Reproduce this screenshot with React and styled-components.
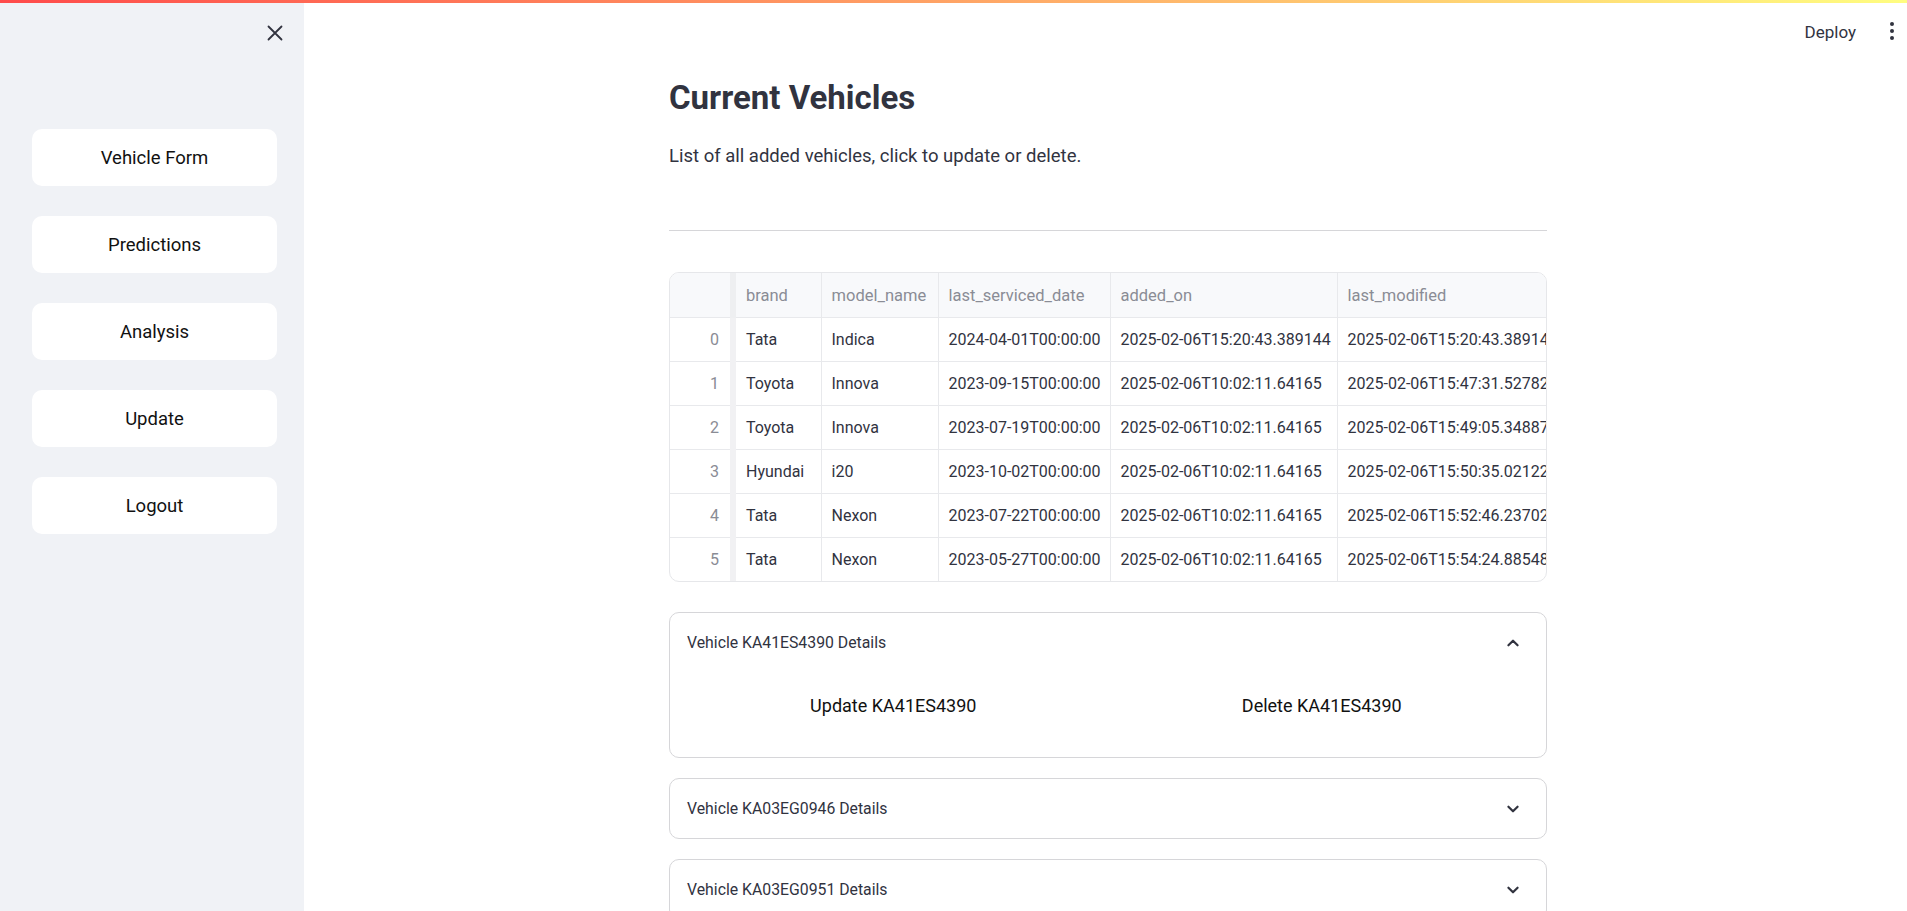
import styled, { createGlobalStyle } from "styled-components";

const GlobalStyle = createGlobalStyle`
  html, body {
    margin: 0;
    padding: 0;
    background: #ffffff;
  }
  body {
    font-family: Roboto, "Liberation Sans", sans-serif;
    color: #31333f;
    overflow: hidden;
  }
  * {
    box-sizing: border-box;
  }
`;

const Page = styled.div`
  display: flex;
  flex-direction: column;
  height: 100vh;
  width: 100vw;
  overflow: hidden;
`;

const Decoration = styled.div`
  height: 3px;
  flex-shrink: 0;
  background: linear-gradient(90deg, rgb(255, 75, 75), rgb(255, 253, 128));
`;

const Body = styled.div`
  display: flex;
  flex: 1;
  min-height: 0;
`;

const Sidebar = styled.aside`
  width: 304px;
  flex-shrink: 0;
  background: #f0f2f6;
  display: flex;
  flex-direction: column;
  padding: 0 27px 0 32px;
`;

const SidebarTop = styled.div`
  height: 126px;
  display: flex;
  justify-content: flex-end;
  padding-top: 22px;
  margin-right: -6px;
`;

const CloseButton = styled.button`
  width: 16px;
  height: 16px;
  padding: 0;
  border: none;
  background: none;
  color: #31333f;
  display: flex;
  align-items: center;
  justify-content: center;
  cursor: pointer;
`;

const NavList = styled.nav`
  display: flex;
  flex-direction: column;
  gap: 30px;
`;

const NavButton = styled.button`
  height: 57px;
  width: 245px;
  border: none;
  border-radius: 10px;
  background: #ffffff;
  color: #111111;
  font-family: inherit;
  font-size: 18.5px;
  cursor: pointer;
`;

const Main = styled.main`
  flex: 1;
  display: flex;
  flex-direction: column;
  padding-left: 5px;
  min-width: 0;
`;

const TopBar = styled.header`
  height: 58px;
  flex-shrink: 0;
  display: flex;
  align-items: center;
  justify-content: flex-end;
  gap: 34px;
  padding-right: 13px;
`;

const DeployLink = styled.span`
  font-size: 17px;
  color: #31333f;
`;

const MenuDots = styled.div`
  display: flex;
  flex-direction: column;
  gap: 3px;
  padding-bottom: 2px;

  span {
    width: 4px;
    height: 4px;
    border-radius: 50%;
    background: #31333f;
  }
`;

const Content = styled.section`
  width: 878px;
  margin: 0 auto;
  display: flex;
  flex-direction: column;
`;

const Title = styled.h2`
  margin: 17px 0 0;
  font-size: 33px;
  font-weight: 700;
  line-height: 1.2;
  color: #31333f;
`;

const Subtitle = styled.p`
  margin: 26px 0 0;
  font-size: 18.5px;
  line-height: 1.4;
  color: #31333f;
`;

const Divider = styled.hr`
  margin: 61px 0 0;
  border: none;
  border-top: 1px solid #d6d6d9;
  width: 100%;
`;

const TableFrame = styled.div`
  margin-top: 41px;
  border: 1px solid #e6e7ea;
  border-radius: 10px;
  overflow: hidden;
`;

const Table = styled.table`
  border-collapse: collapse;
  table-layout: fixed;
  width: 1080px;
  font-size: 16px;
`;

const HeadCell = styled.th`
  height: 44px;
  background: #f8f9fb;
  color: #8a8c95;
  font-weight: 400;
  font-size: 16.5px;
  text-align: left;
  padding: 0 0 0 10px;
  border-right: 1px solid #e8e9ec;
  border-bottom: 1px solid #e8e9ec;
  white-space: nowrap;
  overflow: hidden;
  ${(p) => p.$sticky && "border-left: 6px solid #eeeff1;"}
`;

const Cell = styled.td`
  height: 44px;
  padding: 0 0 0 10px;
  color: #31333f;
  border-right: 1px solid #e8e9ec;
  border-bottom: 1px solid #e8e9ec;
  white-space: nowrap;
  overflow: hidden;
  ${(p) => p.$sticky && "border-left: 6px solid #f1f1f3;"}

  tr:last-child & {
    border-bottom: none;
  }
`;

const IndexCell = styled(Cell)`
  text-align: right;
  padding: 0 11px 0 0;
  color: #8a8c95;
  border-right: 1px solid #dcdde1;
`;

const IndexHead = styled(HeadCell)`
  border-right: 1px solid #dcdde1;
`;

const Expander = styled.div`
  border: 1px solid #d6d6d9;
  border-radius: 10px;
  margin-top: ${(p) => (p.$first ? "30px" : "20px")};
`;

const ExpanderHeader = styled.div`
  height: 59px;
  display: flex;
  align-items: center;
  justify-content: space-between;
  padding: 0 22px 0 17px;
  font-size: 15.8px;
  color: #31333f;
`;

const ExpanderBody = styled.div`
  display: grid;
  grid-template-columns: 1fr 1fr;
  gap: 20px;
  padding: 9px 20px 28px 19px;
`;

const ActionButton = styled.button`
  height: 48px;
  width: 100%;
  border: none;
  background: #ffffff;
  color: #111111;
  font-family: inherit;
  font-size: 18px;
  cursor: pointer;
`;

const Chevron = ({ up }) => (
  <svg width="22" height="22" viewBox="0 0 24 24" fill="none" stroke="#31333f" strokeWidth="2.4" strokeLinecap="round" strokeLinejoin="round">
    {up ? <path d="M7 14.5l5-5 5 5" /> : <path d="M7 9.5l5 5 5-5" />}
  </svg>
);

const rows = [
  ["Tata", "Indica", "2024-04-01T00:00:00", "2025-02-06T15:20:43.389144", "2025-02-06T15:20:43.389144"],
  ["Toyota", "Innova", "2023-09-15T00:00:00", "2025-02-06T10:02:11.64165", "2025-02-06T15:47:31.527821"],
  ["Toyota", "Innova", "2023-07-19T00:00:00", "2025-02-06T10:02:11.64165", "2025-02-06T15:49:05.348874"],
  ["Hyundai", "i20", "2023-10-02T00:00:00", "2025-02-06T10:02:11.64165", "2025-02-06T15:50:35.021225"],
  ["Tata", "Nexon", "2023-07-22T00:00:00", "2025-02-06T10:02:11.64165", "2025-02-06T15:52:46.237021"],
  ["Tata", "Nexon", "2023-05-27T00:00:00", "2025-02-06T10:02:11.64165", "2025-02-06T15:54:24.885481"],
];

const columns = ["brand", "model_name", "last_serviced_date", "added_on", "last_modified"];
const widths = [63, 88, 117, 172, 227, 413];

const navItems = ["Vehicle Form", "Predictions", "Analysis", "Update", "Logout"];

export default function App() {
  return (
    <>
      <GlobalStyle />
      <Page>
        <Decoration />
        <Body>
          <Sidebar>
            <SidebarTop>
              <CloseButton aria-label="Close sidebar">
                <svg width="16" height="16" viewBox="0 0 16 16" stroke="#31333f" strokeWidth="1.8" strokeLinecap="round">
                  <path d="M1.5 1.5l13 13M14.5 1.5l-13 13" />
                </svg>
              </CloseButton>
            </SidebarTop>
            <NavList>
              {navItems.map((item) => (
                <NavButton key={item}>{item}</NavButton>
              ))}
            </NavList>
          </Sidebar>

          <Main>
            <TopBar>
              <DeployLink>Deploy</DeployLink>
              <MenuDots>
                <span />
                <span />
                <span />
              </MenuDots>
            </TopBar>

            <Content>
              <Title>Current Vehicles</Title>
              <Subtitle>List of all added vehicles, click to update or delete.</Subtitle>
              <Divider />

              <TableFrame>
                <Table>
                  <colgroup>
                    {widths.map((w, i) => (
                      <col key={i} style={{ width: w }} />
                    ))}
                  </colgroup>
                  <thead>
                    <tr>
                      <IndexHead />
                      {columns.map((c, i) => (
                        <HeadCell key={c} $sticky={i === 0}>{c}</HeadCell>
                      ))}
                    </tr>
                  </thead>
                  <tbody>
                    {rows.map((r, idx) => (
                      <tr key={idx}>
                        <IndexCell>{idx}</IndexCell>
                        {r.map((v, i) => (
                          <Cell key={i} $sticky={i === 0}>{v}</Cell>
                        ))}
                      </tr>
                    ))}
                  </tbody>
                </Table>
              </TableFrame>

              <Expander $first>
                <ExpanderHeader>
                  Vehicle KA41ES4390 Details
                  <Chevron up />
                </ExpanderHeader>
                <ExpanderBody>
                  <ActionButton>Update KA41ES4390</ActionButton>
                  <ActionButton>Delete KA41ES4390</ActionButton>
                </ExpanderBody>
              </Expander>

              <Expander>
                <ExpanderHeader>
                  Vehicle KA03EG0946 Details
                  <Chevron />
                </ExpanderHeader>
              </Expander>

              <Expander>
                <ExpanderHeader>
                  Vehicle KA03EG0951 Details
                  <Chevron />
                </ExpanderHeader>
              </Expander>
            </Content>
          </Main>
        </Body>
      </Page>
    </>
  );
}
